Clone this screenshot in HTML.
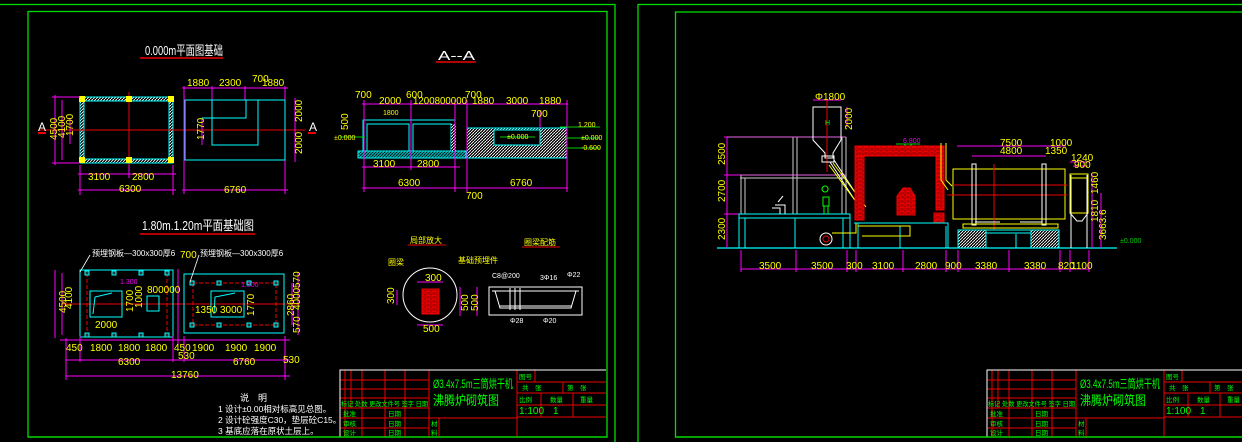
<!DOCTYPE html>
<html><head><meta charset="utf-8"><style>
html,body{margin:0;padding:0;background:#000;width:1242px;height:442px;overflow:hidden}
svg{display:block}
text{font-family:"Liberation Sans","Noto Sans CJK SC",sans-serif}
.y{fill:#ffff00;font-size:10px}
.g{fill:#00ff00}
.w{fill:#fff}
</style></head><body>
<svg width="1242" height="442" viewBox="0 0 1242 442" xmlns="http://www.w3.org/2000/svg">
<defs>
<pattern id="hat" width="3" height="3" patternUnits="userSpaceOnUse"><rect width="3" height="3" fill="#000"/><path d="M0 3L3 0" stroke="#fff" stroke-width="0.9"/></pattern>
<pattern id="hatc" width="3" height="3" patternUnits="userSpaceOnUse"><rect width="3" height="3" fill="#0aa"/><path d="M0 3L3 0" stroke="#000" stroke-width="0.8"/></pattern>
<pattern id="brick" width="6" height="4" patternUnits="userSpaceOnUse"><rect width="6" height="4" fill="#e00"/><path d="M0 0H6M0 2H6M2 0V2M5 2V4" stroke="#600" stroke-width="0.6"/></pattern>
</defs>
<rect width="1242" height="442" fill="#000"/>
<g fill="none" stroke="#00dd00" stroke-width="1.3">
<rect x="-2" y="4.5" width="617" height="450"/>
<rect x="28" y="11.5" width="579" height="425.5"/>
<rect x="638" y="4.5" width="620" height="450"/>
<rect x="675.5" y="12" width="580" height="425"/>
</g>

<!-- ===== LEFT SHEET ===== -->
<text x="145" y="55" fill="#fff" font-size="13" textLength="78" lengthAdjust="spacingAndGlyphs">0.000m平面图基础</text>
<line x1="140" y1="58" x2="223" y2="58" stroke="#e00" stroke-width="1.5"/>
<text x="438" y="60" fill="#fff" font-size="13" textLength="37" lengthAdjust="spacingAndGlyphs">A--A</text>
<line x1="436" y1="62" x2="476" y2="62" stroke="#e00" stroke-width="1.5"/>

<g fill="none" stroke-width="1">
<line x1="38" y1="130" x2="305" y2="130" stroke="#e00"/>
<line x1="129" y1="92" x2="129" y2="168" stroke="#e00"/>
<rect x="80" y="97" width="93" height="66" fill="url(#hat)" stroke="#0ff"/>
<rect x="84" y="101" width="85" height="58" fill="#000" stroke="#0ff"/>
<line x1="38" y1="130" x2="305" y2="130" stroke="#e00"/>
<line x1="129" y1="101" x2="129" y2="159" stroke="#e00"/>
<g fill="#ff0" stroke="none"><rect x="79" y="96" width="6" height="6"/><rect x="126" y="96" width="6" height="6"/><rect x="168" y="96" width="6" height="6"/><rect x="79" y="157" width="6" height="6"/><rect x="126" y="157" width="6" height="6"/><rect x="168" y="157" width="6" height="6"/></g>
<g stroke="#f0f"><line x1="55" y1="95" x2="55" y2="165"/><line x1="62" y1="100" x2="62" y2="160"/><line x1="70" y1="118" x2="70" y2="144"/><line x1="52" y1="97" x2="80" y2="97"/><line x1="52" y1="163" x2="80" y2="163"/>
<line x1="78" y1="174" x2="176" y2="174"/><line x1="78" y1="190" x2="176" y2="190"/><line x1="80" y1="165" x2="80" y2="195"/><line x1="173" y1="165" x2="173" y2="195"/><line x1="129" y1="165" x2="129" y2="178"/>
<line x1="182" y1="88" x2="288" y2="88"/><line x1="182" y1="190" x2="288" y2="190"/><line x1="184" y1="86" x2="184" y2="194"/><line x1="285" y1="86" x2="285" y2="194"/><line x1="295" y1="98" x2="295" y2="162"/><line x1="212" y1="86" x2="212" y2="145"/><line x1="245" y1="86" x2="245" y2="100"/><line x1="202" y1="118" x2="202" y2="145"/></g>
<rect x="185" y="100" width="100" height="60" stroke="#0ff"/>
<path d="M212 100V145H258V100M202 118H246V100" stroke="#0ff"/>
</g>
<g class="y" font-size="10">
<text x="88" y="180">3100</text><text x="132" y="180">2800</text><text x="119" y="192">6300</text>
<text x="187" y="86">1880</text><text x="219" y="86">2300</text><text x="252" y="82">700</text><text x="262" y="86">1880</text><text x="224" y="193">6760</text>
<text transform="translate(57,140) rotate(-90)">4500</text><text transform="translate(65,138) rotate(-90)">4100</text><text transform="translate(73,136) rotate(-90)">1700</text>
<text transform="translate(302,122) rotate(-90)">2000</text><text transform="translate(302,154) rotate(-90)">2000</text><text transform="translate(204,140) rotate(-90)">1770</text>
</g>
<text x="38" y="131" fill="#fff" font-size="12">A</text><line x1="38" y1="133" x2="46" y2="133" stroke="#e00" stroke-width="2"/>
<text x="309" y="131" fill="#fff" font-size="12">A</text><line x1="308" y1="133" x2="316" y2="133" stroke="#e00" stroke-width="2"/>

<g fill="none" stroke-width="1">
<rect x="467" y="128" width="100" height="30" fill="url(#hat)" stroke="#0ff"/>
<rect x="494" y="130" width="46" height="15" fill="#000" stroke="#0ff"/>
<rect x="358" y="151" width="108" height="7" fill="url(#hatc)" stroke="#0ff"/>
<rect x="363" y="120" width="92" height="31" stroke="#0ff"/>
<rect x="367" y="124" width="42" height="27" stroke="#0ff"/><rect x="413" y="124" width="38" height="27" stroke="#0ff"/>
<rect x="451" y="124" width="5" height="27" fill="url(#hat)" stroke="none"/>
<g stroke="#f0f"><line x1="362" y1="104" x2="568" y2="104"/><line x1="362" y1="167" x2="460" y2="167"/><line x1="362" y1="188" x2="568" y2="188"/>
<line x1="364" y1="100" x2="364" y2="192"/><line x1="455" y1="100" x2="455" y2="192"/><line x1="567" y1="100" x2="567" y2="192"/><line x1="467" y1="100" x2="467" y2="192"/><line x1="411" y1="100" x2="411" y2="170"/><line x1="540" y1="110" x2="540" y2="128"/></g>
<g stroke="#0c0"><path d="M340 137H365M560 127H600M565 138H600M565 148H600M500 137H535"/></g>
</g>
<g class="y" font-size="9.5">
<text x="355" y="98">700</text><text x="379" y="104">2000</text><text x="406" y="98">600</text><text x="413" y="104" textLength="54" lengthAdjust="spacingAndGlyphs">1200800000</text><text x="465" y="98">700</text><text x="472" y="104">1880</text><text x="506" y="104">3000</text><text x="539" y="104">1880</text><text x="531" y="117">700</text>
<text x="373" y="167">3100</text><text x="417" y="167">2800</text><text x="398" y="186">6300</text><text x="510" y="186">6760</text><text x="466" y="199">700</text>
<text transform="translate(348,130) rotate(-90)">500</text>
<text x="383" y="115" font-size="7">1800</text><text x="334" y="140" font-size="7">±0.000</text><text x="507" y="139" font-size="7">±0.000</text><text x="578" y="127" font-size="7">1.200</text><text x="581" y="140" font-size="7">±0.000</text><text x="581" y="150" font-size="7">-0.600</text>
</g>

<text x="142" y="230" fill="#fff" font-size="13" textLength="112" lengthAdjust="spacingAndGlyphs">1.80m.1.20m平面基础图</text>
<line x1="140" y1="234" x2="255" y2="234" stroke="#e00" stroke-width="1.5"/>

<g fill="none" stroke-width="1">
<line x1="62" y1="304" x2="300" y2="304" stroke="#e00"/>
<g stroke="#e00" stroke-dasharray="4 2"><rect x="193" y="283" width="83" height="42"/><line x1="87" y1="273" x2="87" y2="335"/><line x1="167" y1="273" x2="167" y2="335"/></g>
<rect x="80" y="270" width="93" height="67" stroke="#0ff"/>
<rect x="90" y="291" width="32" height="26" stroke="#0ff"/><rect x="147" y="296" width="12" height="15" stroke="#0ff"/>
<path d="M93 314L95 297L112 293" stroke="#0ff"/>
<rect x="184" y="274" width="100" height="59" stroke="#0ff"/>
<rect x="211" y="291" width="33" height="26" stroke="#0ff"/>
<path d="M214 314L215 297L235 293" stroke="#0ff"/>
<g stroke="#0ff" fill="#333"><rect x="85" y="271" width="4" height="4"/><rect x="112" y="271" width="4" height="4"/><rect x="139" y="271" width="4" height="4"/><rect x="165" y="271" width="4" height="4"/><rect x="85" y="333" width="4" height="4"/><rect x="112" y="333" width="4" height="4"/><rect x="139" y="333" width="4" height="4"/><rect x="165" y="333" width="4" height="4"/>
<rect x="190" y="281" width="4" height="4"/><rect x="217" y="281" width="4" height="4"/><rect x="247" y="281" width="4" height="4"/><rect x="274" y="281" width="4" height="4"/><rect x="190" y="323" width="4" height="4"/><rect x="217" y="323" width="4" height="4"/><rect x="247" y="323" width="4" height="4"/><rect x="274" y="323" width="4" height="4"/></g>
<g stroke="#f0f"><line x1="60" y1="340" x2="290" y2="340"/><line x1="66" y1="360" x2="290" y2="360"/><line x1="66" y1="376" x2="290" y2="376"/><line x1="55" y1="270" x2="55" y2="338"/><line x1="62" y1="273" x2="62" y2="335"/>
<line x1="66" y1="338" x2="66" y2="380"/><line x1="80" y1="336" x2="80" y2="362"/><line x1="173" y1="336" x2="173" y2="362"/><line x1="184" y1="336" x2="184" y2="362"/><line x1="285" y1="336" x2="285" y2="380"/><line x1="298" y1="272" x2="298" y2="335"/><line x1="292" y1="283" x2="292" y2="325"/>
<line x1="178" y1="269" x2="178" y2="345"/></g>
</g>
<g class="y" font-size="10">
<text x="66" y="351">450</text><text x="90" y="351">1800</text><text x="118" y="351">1800</text><text x="145" y="351">1800</text><text x="174" y="351">450</text><text x="192" y="351">1900</text><text x="225" y="351">1900</text><text x="254" y="351">1900</text>
<text x="178" y="359">530</text><text x="283" y="363">530</text><text x="118" y="365">6300</text><text x="233" y="365">6760</text><text x="171" y="378">13760</text>
<text x="95" y="328">2000</text><text x="220" y="313">3000</text><text x="195" y="313">1350</text><text x="147" y="293">800000</text><text x="180" y="258">700</text>
<text transform="translate(66,313) rotate(-90)">4500</text><text transform="translate(72,309) rotate(-90)">4100</text><text transform="translate(133,312) rotate(-90)">1700</text><text transform="translate(142,308) rotate(-90)">1000</text>
<text transform="translate(254,316) rotate(-90)">1770</text><text transform="translate(294,316) rotate(-90)">2860</text><text transform="translate(300,310) rotate(-90)">4000</text><text transform="translate(300,288) rotate(-90)">570</text><text transform="translate(300,333) rotate(-90)">570</text>
</g>
<text x="92" y="256" class="w" font-size="8">预埋钢板—300x300厚6</text><text x="200" y="256" class="w" font-size="8">预埋钢板—300x300厚6</text>
<line x1="90" y1="255" x2="80" y2="272" stroke="#fff" stroke-width="0.8"/><line x1="199" y1="255" x2="190" y2="282" stroke="#fff" stroke-width="0.8"/>
<text x="120" y="284" fill="#e0e" font-size="7">1.300</text><text x="241" y="287" fill="#e0e" font-size="7">1.800</text>

<text x="410" y="243" fill="#ff0" font-size="8">局部放大</text><line x1="408" y1="245" x2="446" y2="245" stroke="#e00"/>
<text x="524" y="245" fill="#ff0" font-size="8">圈梁配筋</text><line x1="522" y1="247" x2="560" y2="247" stroke="#e00"/>
<circle cx="430" cy="295" r="27" fill="none" stroke="#fff"/>
<rect x="422" y="289" width="17" height="25" fill="url(#brick)" stroke="#e00"/>
<g stroke="#f0f" fill="none"><line x1="417" y1="282" x2="443" y2="282"/><line x1="417" y1="325" x2="443" y2="325"/><line x1="397" y1="290" x2="397" y2="305"/><line x1="460" y1="287" x2="460" y2="316"/><line x1="477" y1="287" x2="477" y2="316"/></g>
<text x="425" y="281" class="y" font-size="10">300</text><text x="423" y="332" class="y" font-size="10">500</text>
<text transform="translate(394,304) rotate(-90)" class="y" font-size="10">300</text><text transform="translate(468,311) rotate(-90)" class="y" font-size="10">500</text><text transform="translate(478,311) rotate(-90)" class="y" font-size="10">500</text>
<text x="388" y="265" fill="#ff0" font-size="8">圈梁</text><text x="458" y="263" fill="#ff0" font-size="8">基础预埋件</text>
<g fill="none" stroke="#fff" stroke-width="1"><rect x="489" y="287" width="93" height="28"/><path d="M492 291H579M495 291L500 308H571L576 291M500 306H571M510 288V310M515 288V310M520 288V310"/></g>
<text x="492" y="278" fill="#fff" font-size="7">C8@200</text><text x="540" y="280" fill="#fff" font-size="7">3Φ16</text><text x="567" y="277" fill="#fff" font-size="7">Φ22</text><text x="510" y="323" fill="#fff" font-size="7">Φ28</text><text x="543" y="323" fill="#fff" font-size="7">Φ20</text>

<text x="240" y="401" fill="#fff" font-size="9">说　明</text>
<text x="218" y="412" fill="#fff" font-size="8.5">1 设计±0.00相对标高见总图。</text>
<text x="218" y="423" fill="#fff" font-size="8.5">2 设计砼强度C30，垫层砼C15。</text>
<text x="218" y="434" fill="#fff" font-size="8.5">3 基底应落在原状土层上。</text>

<g>
<g stroke="#e00" fill="none" stroke-width="1">
<path d="M340 380H429M340 389H429M340 398H429M340 408H429M340 418H517M340 428H429"/>
<path d="M345 370V437M351 370V408M362 370V437M385 370V437M405 370V437M429 370V437M439 418V437M517 370V437"/>
<path d="M517 382H606M517 393H606M517 405H606M517 417H606M535 370V382M563 382V393M541 393V417M573 393V417"/>
</g>
<path d="M340 437V370H606" fill="none" stroke="#fff" stroke-width="1"/>
<text x="433" y="388" fill="#0f0" font-size="12" textLength="80" lengthAdjust="spacingAndGlyphs">Ø3.4x7.5m三筒烘干机</text>
<text x="433" y="405" fill="#0f0" font-size="13" textLength="66" lengthAdjust="spacingAndGlyphs">沸腾炉砌筑图</text>
<g fill="#0f0" font-size="6.5"><text x="341" y="406" textLength="87" lengthAdjust="spacingAndGlyphs">标记 处数 更改文件号 签字 日期</text><text x="343" y="416">批准</text><text x="343" y="426">审核</text><text x="343" y="435">设计</text><text x="388" y="416">日期</text><text x="388" y="426">日期</text><text x="388" y="435">日期</text><text x="431" y="426">材</text><text x="431" y="435">料</text>
<text x="519" y="379">图号</text><text x="522" y="390">共　张</text><text x="567" y="390">第　张</text><text x="519" y="402">比例</text><text x="550" y="402">数量</text><text x="580" y="402">重量</text></g>
<text x="519" y="414" fill="#0f0" font-size="10">1:100</text><text x="553" y="414" fill="#0f0" font-size="10">1</text>
</g>

<!-- ===== RIGHT SHEET ===== -->
<line x1="717" y1="248" x2="1117" y2="248" stroke="#0ff" stroke-width="1.2"/>
<g stroke="#f0f" fill="none">
<line x1="741" y1="269" x2="1090" y2="269"/>
<path d="M741 250V272M796 250V272M847 250V272M856 250V272M903 250V272M946 250V272M958 250V272M1009 250V272M1060 250V272M1070 250V272M1089 250V272"/>
<line x1="727" y1="137" x2="727" y2="248"/><path d="M724 137H745M724 175H745M724 214H745"/>
<path d="M813 100H841M847 107V127M957 146H1066M972 156H1046M1070 162H1090M1073 166H1088M1092 174V248M1101 193V248"/>
</g>
<g class="y" font-size="10">
<text x="759" y="269">3500</text><text x="811" y="269">3500</text><text x="846" y="269">300</text><text x="872" y="269">3100</text><text x="915" y="269">2800</text><text x="945" y="269">900</text><text x="975" y="269">3380</text><text x="1024" y="269">3380</text><text x="1058" y="269">820</text><text x="1071" y="269">1100</text>
<text x="815" y="100">Φ1800</text><text x="1000" y="146">7500</text><text x="1050" y="146">1000</text><text x="1000" y="154">4800</text><text x="1045" y="154">1350</text><text x="1071" y="161">1240</text><text x="1074" y="168">900</text>
<text transform="translate(725,165) rotate(-90)">2500</text><text transform="translate(725,202) rotate(-90)">2700</text><text transform="translate(725,240) rotate(-90)">2300</text>
<text transform="translate(852,130) rotate(-90)">2000</text><text transform="translate(1098,194) rotate(-90)">1460</text><text transform="translate(1098,222) rotate(-90)">1810</text><text transform="translate(1106,240) rotate(-90)">3663.6</text>
</g>
<text x="903" y="143" fill="#e0e" font-size="7">6.800</text><path d="M896 144H920M904 144L908 148L912 144" stroke="#0c0" fill="none"/>
<g fill="none" stroke-width="1">
<path d="M727 137H846M740 175H846M740 178H846M741 175V214M745 178V214M793 137V214M797 137V214M842 137V214M846 137V214" stroke="#ccc"/>
<path d="M727 137H846M740 175H846" stroke="#f0f" stroke-width="0.6"/>
<rect x="739" y="214" width="111" height="34" stroke="#0ff"/><path d="M739 218H850M745 218V248M795 218V248M843 218V248" stroke="#0ff"/>
<path d="M813 107H841V140L833 153V158H825V153L813 140Z" stroke="#fff"/>
<line x1="827" y1="100" x2="827" y2="172" stroke="#e00"/>
<path d="M822 156H834V162H822ZM830 162L858 205M834 160L862 203" stroke="#fff"/>
<path d="M829 165L862 210M833 163L866 207" stroke="#ff0"/>
<path d="M772 208H780V214M775 205H785V214M778 202L783 196" stroke="#fff"/>
<path d="M825 192a3 3 0 1 1 0.1 0M823 197H829V206H823ZM824 206V214M828 206V214" stroke="#0f0"/>
<circle cx="826" cy="239" r="6" stroke="#fff"/><circle cx="826" cy="239" r="3" stroke="#e00"/>
<path d="M832 233H856V223" stroke="#ff0"/>
<rect x="855" y="146" width="89" height="10" fill="url(#brick)" stroke="#e00"/>
<rect x="855" y="156" width="9" height="64" fill="url(#brick)" stroke="#e00"/>
<rect x="936" y="156" width="8" height="54" fill="url(#brick)" stroke="#e00"/>
<path d="M897 215V196L903 188H910L915 196V215Z" fill="url(#brick)" stroke="#e00"/>
<rect x="934" y="213" width="10" height="10" fill="url(#brick)" stroke="#e00"/>
<path d="M854 223H948V248M858 223V248M900 226V248M946 226V248" stroke="#0ff"/>
<path d="M858 226H910V236H862" stroke="#ff0"/>
<path d="M941 143V180L948 190" stroke="#ff0"/><path d="M946 143V180L952 186" stroke="#ff0"/>
<rect x="953" y="169" width="112" height="50" stroke="#ff0"/>
<path d="M953 185H1067M947 195H1067M994 164V230" stroke="#e00"/>
<path d="M972 164V225H976V164ZM1042 164V225H1046V164Z" stroke="#fff"/>
<path d="M963 224H1058V228H963Z" stroke="#ff0"/>
<path d="M975 222H1000M1020 222H1042" stroke="#fff"/>
<rect x="958" y="230" width="28" height="18" fill="url(#hat)" stroke="#0ff"/>
<rect x="1031" y="230" width="28" height="18" fill="url(#hat)" stroke="#0ff"/>
<path d="M986 230H1031M986 233H1031M1016 234V248" stroke="#0ff"/>
<rect x="1070" y="174" width="18" height="39" stroke="#ff0"/>
<path d="M1070 213L1077 221H1082L1088 213M1071 175V248M1087 175V248" stroke="#fff"/>
<path d="M1070 178H1088" stroke="#ff0"/>
</g>
<text x="825" y="125" fill="#0f0" font-size="7">H</text>
<text x="1120" y="243" fill="#0c0" font-size="7">±0.000</text>

<g transform="translate(647,0)">
<g stroke="#e00" fill="none" stroke-width="1">
<path d="M340 380H429M340 389H429M340 398H429M340 408H429M340 418H517M340 428H429"/>
<path d="M345 370V437M351 370V408M362 370V437M385 370V437M405 370V437M429 370V437M439 418V437M517 370V437"/>
<path d="M517 382H606M517 393H606M517 405H606M517 417H606M535 370V382M563 382V393M541 393V417M573 393V417"/>
</g>
<path d="M340 437V370H620" fill="none" stroke="#fff" stroke-width="1"/>
<text x="433" y="388" fill="#0f0" font-size="12" textLength="80" lengthAdjust="spacingAndGlyphs">Ø3.4x7.5m三筒烘干机</text>
<text x="433" y="405" fill="#0f0" font-size="13" textLength="66" lengthAdjust="spacingAndGlyphs">沸腾炉砌筑图</text>
<g fill="#0f0" font-size="6.5"><text x="341" y="406" textLength="87" lengthAdjust="spacingAndGlyphs">标记 处数 更改文件号 签字 日期</text><text x="343" y="416">批准</text><text x="343" y="426">审核</text><text x="343" y="435">设计</text><text x="388" y="416">日期</text><text x="388" y="426">日期</text><text x="388" y="435">日期</text><text x="431" y="426">材</text><text x="431" y="435">料</text>
<text x="519" y="379">图号</text><text x="522" y="390">共　张</text><text x="567" y="390">第　张</text><text x="519" y="402">比例</text><text x="550" y="402">数量</text><text x="580" y="402">重量</text></g>
<text x="519" y="414" fill="#0f0" font-size="10">1:100</text><text x="553" y="414" fill="#0f0" font-size="10">1</text>
</g>
<line x1="28" y1="437" x2="607" y2="437" stroke="#00dd00" stroke-width="1.3"/>
<line x1="675" y1="437" x2="1242" y2="437" stroke="#00dd00" stroke-width="1.3"/>
</svg>
</body></html>
